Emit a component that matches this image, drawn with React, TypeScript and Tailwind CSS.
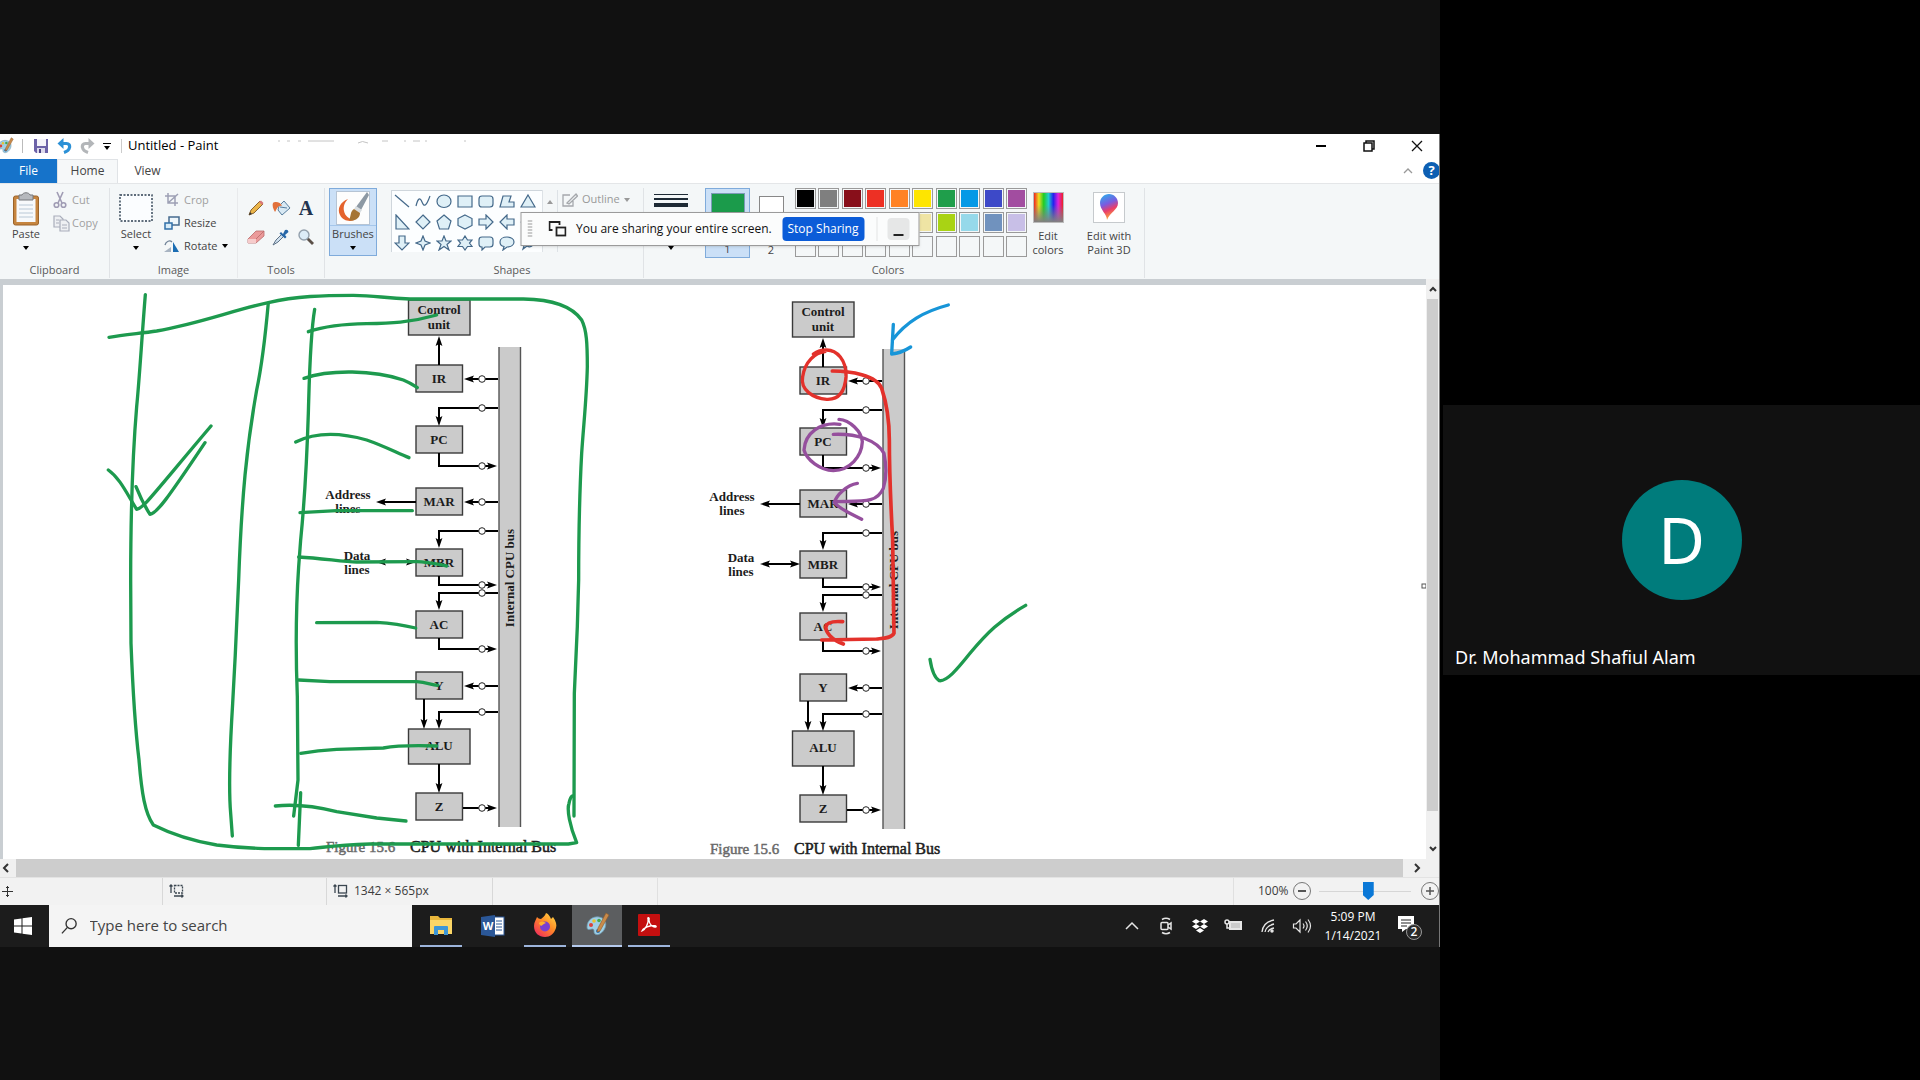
import React from "react";

const GREEN = "#1d9a4e";

/* ---------- canvas drawing: CPU diagram ---------- */

function Box({ x, y, w, h }: { x: number; y: number; w: number; h: number }) {
  return <rect x={x} y={y} width={w} height={h} fill="#cbcbcb" stroke="#3a3a3a" strokeWidth="1.4" />;
}

function Head({ x, y, dir }: { x: number; y: number; dir: "up" | "down" | "left" | "right" }) {
  const angle = { right: 0, down: 90, left: 180, up: 270 }[dir];
  return <path d="M0 0L-10 -3.4L-8 0L-10 3.4Z" fill="#000" transform={`translate(${x} ${y}) rotate(${angle})`} />;
}

function Diagram({ dx, dy }: { dx: number; dy: number }) {
  const registers: [string, number][] = [
    ["IR", 365],
    ["PC", 426],
    ["MAR", 488],
    ["MBR", 549],
    ["AC", 611],
    ["Y", 672],
    ["Z", 793],
  ];
  const circles = [379, 408, 466, 502, 531, 585, 593, 649, 686, 712, 808];
  return (
    <g transform={`translate(${dx} ${dy})`} fontFamily='"Liberation Serif", serif'>
      <rect x="499" y="347" width="21" height="480" fill="#cbcbcb" />
      <path d="M499 347V827M520.5 347V827" stroke="#555" strokeWidth="1.4" />
      <Box x={408.5} y={300} w={61.5} h={35} />
      {registers.map(([name, y]) => (
        <Box key={name} x={416} y={y} w={46.5} h={27} />
      ))}
      <Box x={408.5} y={729} w={61.5} h={35} />
      <g fill="none" stroke="#000" strokeWidth="2">
        <path d="M439 365V342" />
        <path d="M498 379H468" />
        <path d="M498 408H439V420" />
        <path d="M439 453V466H492" />
        <path d="M498 502H468" />
        <path d="M416 502H383" />
        <path d="M498 531H439V542" />
        <path d="M383 562H410" />
        <path d="M439 576V585H492" />
        <path d="M498 593H439V604" />
        <path d="M439 638V649H492" />
        <path d="M498 686H468" />
        <path d="M424 699V722" />
        <path d="M498 712H439V722" />
        <path d="M439 764V786" />
        <path d="M463 808H492" />
      </g>
      <Head x={439} y={336} dir="up" />
      <Head x={464} y={379} dir="left" />
      <Head x={439} y={426} dir="down" />
      <Head x={497} y={466} dir="right" />
      <Head x={464} y={502} dir="left" />
      <Head x={376} y={502} dir="left" />
      <Head x={439} y={548} dir="down" />
      <Head x={376} y={562} dir="left" />
      <Head x={416} y={562} dir="right" />
      <Head x={497} y={585} dir="right" />
      <Head x={439} y={610} dir="down" />
      <Head x={497} y={649} dir="right" />
      <Head x={464} y={686} dir="left" />
      <Head x={424} y={729} dir="down" />
      <Head x={439} y={729} dir="down" />
      <Head x={439} y={793} dir="down" />
      <Head x={497} y={808} dir="right" />
      {circles.map((y) => (
        <circle key={y} cx="482" cy={y} r="3.3" fill="#fff" stroke="#222" strokeWidth="1" />
      ))}
      <g fontWeight="bold" fontSize="13" textAnchor="middle" fill="#1c1c1c">
        <text x="439" y="314">Control</text>
        <text x="439" y="329">unit</text>
        {registers.map(([name, y]) => (
          <text key={name} x="439" y={y + 18}>{name}</text>
        ))}
        <text x="439" y="750">ALU</text>
        <text x="348" y="499">Address</text>
        <text x="348" y="513">lines</text>
        <text x="357" y="560">Data</text>
        <text x="357" y="574">lines</text>
        <text transform="translate(514 578) rotate(-90)">Internal CPU bus</text>
      </g>
      <text x="326" y="852" fontSize="15" fill="#6b6b6b" stroke="#6b6b6b" strokeWidth="0.5">Figure 15.6</text>
      <text x="410" y="852" fontSize="16" fill="#1c1c1c" stroke="#1c1c1c" strokeWidth="0.5">CPU with Internal Bus</text>
    </g>
  );
}

function Canvas() {
  return (
    <svg viewBox="3 285 1423 574" className="block h-[574px] w-[1423px] shrink-0" role="img" aria-label="CPU with internal bus diagram">
      <Diagram dx={0} dy={0} />
      <Diagram dx={384} dy={2} />
      <g transform="translate(90 280) scale(0.33333)" fill="none" stroke={GREEN} strokeWidth="10" strokeLinecap="round" strokeLinejoin="round">
        <path d="M57 172C100 165 150 160 200 153C330 130 430 90 535 68C620 48 700 46 790 46C860 46 880 55 960 57L1300 57C1370 58 1440 70 1475 120C1490 150 1492 190 1492 260C1490 350 1482 420 1475 520C1468 650 1466 750 1466 900L1462 1040L1453 1240L1452 1608" />
        <path d="M166 44C155 180 148 300 140 380C130 500 122 650 122 900L123 1090C128 1220 135 1340 147 1440C155 1540 165 1600 190 1635C250 1665 320 1685 380 1695C480 1708 560 1706 660 1706C720 1700 740 1695 840 1692L1435 1692L1460 1688C1440 1640 1430 1590 1437 1570C1440 1555 1443 1550 1447 1548" />
        <path d="M535 68C525 180 515 260 500 330C470 500 455 650 446 900C442 1000 435 1150 428 1270C420 1400 415 1520 422 1600L427 1668" />
        <path d="M674 88C660 170 658 300 655 400C650 560 640 700 632 780L626 860C618 980 616 1100 622 1250L624 1500L611 1608" />
        <path d="M632 1538L625 1696" />
        <path d="M655 155C700 140 760 132 830 131C900 130 960 128 1040 105" />
        <path d="M642 295C720 268 850 270 940 300C960 308 970 315 982 323" />
        <path d="M617 486C680 455 760 460 830 480C880 497 920 518 957 533" />
        <path d="M630 698L740 692L967 692" />
        <path d="M626 831C700 835 760 846 800 846L980 845C1010 845 1040 852 1070 858" />
        <path d="M680 1028L860 1027C910 1030 940 1035 977 1044" />
        <path d="M626 1200L720 1205L980 1205C1010 1207 1020 1213 1043 1216" />
        <path d="M632 1420C660 1415 700 1410 740 1408L880 1404C930 1395 980 1396 1040 1398" />
        <path d="M556 1578C610 1572 680 1580 740 1595L860 1614L948 1623" />
        <path d="M55 570C90 595 110 640 140 688C160 685 175 660 363 438" />
        <path d="M138 620C150 650 165 680 180 703C200 700 230 660 345 488" />
      </g>
      <g transform="translate(690 290) scale(0.33333)" fill="none" strokeWidth="10" strokeLinecap="round" strokeLinejoin="round">
        <path stroke="#1795d8" d="M775 45C700 65 650 95 607 150M610 103L605 192C630 190 645 182 662 171" />
        <path stroke="#e3312b" d="M405 185C375 188 345 215 338 260C330 300 370 325 410 328C450 330 465 300 468 260C470 210 440 180 410 180C395 180 380 185 370 192" />
        <path stroke="#e3312b" strokeWidth="11" d="M427 243C480 243 560 255 575 295C590 340 598 380 598 450C598 560 602 640 608 750L612 1030C605 1045 580 1045 560 1047L395 1050M458 995C430 993 410 997 408 1010C405 1025 425 1050 460 1062" />
        <path stroke="#954f9d" d="M450 403C390 395 345 430 342 480C350 510 390 540 430 542C480 540 515 500 517 455C515 425 480 390 447 388M430 433C500 430 560 450 582 490C590 530 588 570 580 595C560 640 520 633 435 635M502 580C470 585 440 615 433 637C445 655 480 670 515 688" />
        <path stroke={GREEN} d="M720 1108C725 1140 735 1165 748 1172C770 1175 800 1140 840 1090C890 1030 930 990 1007 946" />
      </g>
      <rect x="1422" y="584" width="4" height="4" fill="#fff" stroke="#555" strokeWidth="1" />
    </svg>
  );
}

/* ---------- icons ---------- */

function PaintLogo({ className }: { className: string }) {
  return (
    <svg viewBox="0 0 26 26" className={className} aria-hidden="true">
      <path d="M3 15C3 8 9 4 15 5C21 6 23 11 21 16C19 21 14 24 11 22C9 20 11 18 9 17C6 17 3 19 3 15Z" fill="#9fd0e6" stroke="#6f98ad" strokeWidth=".8" />
      <circle cx="7" cy="13" r="2" fill="#d8433b" />
      <circle cx="10" cy="9" r="1.8" fill="#e9c22f" />
      <circle cx="15" cy="8.5" r="1.8" fill="#47a650" />
      <circle cx="14" cy="19" r="2" fill="#2d6fb5" />
      <path d="M22 1L25 3L16 19L13 20L14 16Z" fill="#c98a4a" stroke="#8b5a2b" strokeWidth=".6" />
    </svg>
  );
}

function SaveIcon() {
  return (
    <svg viewBox="0 0 16 16" className="size-4" aria-hidden="true">
      <path d="M1 1H15V15H3L1 13Z" fill="#6c62a8" />
      <rect x="4" y="1" width="9" height="7" fill="#f4f3fa" />
      <rect x="4" y="10" width="8" height="5" fill="#dcd9ec" />
      <rect x="6" y="11" width="2" height="4" fill="#4b4286" />
    </svg>
  );
}

function UndoIcon({ color, flip }: { color: string; flip?: boolean }) {
  return (
    <svg viewBox="0 0 16 16" className={flip ? "size-4 -scale-x-100" : "size-4"} aria-hidden="true">
      <path d="M3.5 5.5H9.5C12 5.5 13 7.5 12.5 9.5C12 12 10 13.5 7 14.5" fill="none" stroke={color} strokeWidth="3.2" />
      <path d="M0.5 5.5L6.5 0V11Z" fill={color} />
    </svg>
  );
}

function Caret({ className }: { className: string }) {
  return (
    <svg viewBox="0 0 6 4" className={className} aria-hidden="true">
      <path d="M0 0H6L3 4Z" fill="currentColor" />
    </svg>
  );
}

function PasteIcon() {
  return (
    <svg viewBox="0 0 28 34" className="h-[34px] w-7" aria-hidden="true">
      <rect x="1.5" y="4" width="25" height="29" rx="2" fill="#c6853f" stroke="#9b632a" />
      <rect x="4.5" y="7" width="19" height="23" fill="#f7f9fb" />
      <path d="M7 13H21M7 17H21M7 21H21M7 25H21" stroke="#b9c8d6" />
      <path d="M7 3H10C11 0 17 0 18 3H21V8H7Z" fill="#b6b9bd" stroke="#77797c" />
    </svg>
  );
}

function CutIcon() {
  return (
    <svg viewBox="0 0 16 18" className="h-[18px] w-4" fill="none" stroke="#a09cb4" strokeWidth="1.6" aria-hidden="true">
      <path d="M5 1L10 12M11 1L6 12" />
      <circle cx="4.5" cy="14" r="2.3" />
      <circle cx="11.5" cy="14" r="2.3" />
    </svg>
  );
}

function CopyIcon() {
  return (
    <svg viewBox="0 0 18 18" className="size-[18px]" fill="#eef0f3" stroke="#a9aebb" strokeWidth="1.2" aria-hidden="true">
      <path d="M2 2H8L11 5V13H2Z" />
      <path d="M8 6H14L17 9V17H8Z" />
      <path d="M4 6H7M4 9H7M10 11H15M10 14H15" />
    </svg>
  );
}

function SelectIcon() {
  return (
    <svg viewBox="0 0 34 28" className="h-7 w-[34px]" aria-hidden="true">
      <rect x="1" y="1" width="32" height="26" fill="#fbfdff" stroke="#2c3e50" strokeWidth="1.4" strokeDasharray="2 1.5" />
    </svg>
  );
}

function CropIcon() {
  return (
    <svg viewBox="0 0 16 14" className="h-3.5 w-4" fill="none" stroke="#9da0b4" strokeWidth="1.5" aria-hidden="true">
      <path d="M4 0V10H14M1 3H11V13M4 10L14 1" />
    </svg>
  );
}

function ResizeIcon() {
  return (
    <svg viewBox="0 0 16 14" className="h-3.5 w-4" aria-hidden="true">
      <rect x="5" y="1" width="10" height="8" fill="#eef6fb" stroke="#466b8e" strokeWidth="1.5" />
      <rect x="1" y="7" width="7" height="6" fill="#d9ecf7" stroke="#2f6fa8" strokeWidth="1.5" />
    </svg>
  );
}

function RotateIcon() {
  return (
    <svg viewBox="0 0 16 14" className="h-3.5 w-4" aria-hidden="true">
      <path d="M9 3V13H15Z" fill="#1b6db3" />
      <path d="M0 13L7 8V13Z" fill="#a8b4c2" />
      <path d="M1 6C2 2 6 1 8 3" fill="none" stroke="#6f8297" strokeWidth="1.3" />
    </svg>
  );
}

const toolIcons: [string, React.ReactNode][] = [
  ["Pencil", <g key="p"><path d="M1 15L3 10L12 1L15 4L6 13Z" fill="#eab54a" stroke="#8a6430" /><path d="M11 2L14 5L15.5 3L13 .5Z" fill="#d87878" /><path d="M1 15L2 12L4 14Z" fill="#333" /></g>],
  ["Fill", <g key="f"><path d="M6 6L11 1L17 8L9 15L5 10Z" fill="#d8e9f4" stroke="#577d9d" /><path d="M7 7L14 8" stroke="#577d9d" /><path d="M0 3C2 1 8 2 9 6C5 5 4 9 2 12C0 9 -1 5 0 3Z" fill="#e2703a" /></g>],
  ["Text", <text key="t" x="8" y="15" textAnchor="middle" fontFamily='"Liberation Serif", serif' fontWeight="bold" fontSize="20" fill="#22344f">A</text>],
  ["Eraser", <g key="e"><path d="M0 10L8 2H16V7L8 14H0Z" fill="#eb9a9a" stroke="#b96a6a" strokeWidth=".8" /><path d="M0 10H8V14H0Z" fill="#f6cccc" /><path d="M8 10L16 2" stroke="#b96a6a" strokeWidth=".8" /></g>],
  ["Color picker", <g key="c"><path d="M0 16L3 11L9 5L11 7L5 13Z" fill="#cfe0ee" stroke="#5d7186" /><path d="M8 3L10 5L12 1Q15 0 15.5 3L12 6L13.5 8L12 9.5L6.5 4.5Z" fill="#2767a8" /></g>],
  ["Magnifier", <g key="m"><path d="M9 9L15 15" stroke="#5b5048" strokeWidth="2.8" /><circle cx="6" cy="6" r="5" fill="#dcecf8" stroke="#93a0ad" strokeWidth="1.4" /></g>],
];

function BrushIcon() {
  return (
    <svg viewBox="0 0 34 34" className="size-[34px]" aria-hidden="true">
      <rect x=".5" y=".5" width="33" height="33" fill="#fdfdfd" stroke="#b6c4d4" />
      <path d="M12 8C4 11 1 18 4 24C7 30 14 31 18 29C13 28 9 25 8 20C7 15 9 11 12 8Z" fill="#e4622c" />
      <path d="M31 1L33 4L25 19L20 16Z" fill="#8d99a4" />
      <path d="M20 15L26 19L24 22L18 18Z" fill="#d8dde0" />
      <path d="M18 18L24 22C24 28 17 31 13 29C15 26 14 20 18 18Z" fill="#a57535" />
    </svg>
  );
}

const shapePaths: string[] = [
  "M1 2L15 14",
  "M1 13C3 5 5 4 7 9C9 14 11 14 15 3",
  "M8 2C12 2 15 5 15 8.5C15 12 12 14.5 8 14.5C4 14.5 1 12 1 8.5C1 5 4 2 8 2Z",
  "M1 3H15V14H1Z",
  "M4 3H12Q15 3 15 6V11Q15 14 12 14H4Q1 14 1 11V6Q1 3 4 3Z",
  "M4 3H12L10 9H15V14H1Z",
  "M8 2L15 14H1Z",
  "M2 1L15 15H2Z",
  "M8 1L15 8L8 15L1 8Z",
  "M8 1L15 7L12.5 15H3.5L1 7Z",
  "M8 1L15 4.5V11.5L8 15L1 11.5V4.5Z",
  "M1 5H8V1L15 8L8 15V11H1Z",
  "M15 5H8V1L1 8L8 15V11H15Z",
  "M5 1H11V8H15L8 15L1 8H5Z",
  "M8 1L10 6L15 8L10 10L8 15L6 10L1 8L6 6Z",
  "M8 1L10 6H15L11 9.5L13 15L8 11.5L3 15L5 9.5L1 6H6Z",
  "M8 1L10.5 5H15L12.5 8L15 11.5H10.5L8 15L5.5 11.5H1L3.5 8L1 5H5.5Z",
  "M4 2H12Q15 2 15 5V9Q15 12 12 12H7L4 15V12Q1 12 1 9V5Q1 2 4 2Z",
  "M8 2C12 2 15 4 15 7C15 10 12 12 8 12L4 15L5 11.5C2 11 1 9 1 7C1 4 4 2 8 2Z",
  "M3 4Q5 1 8 3Q12 1 13 4Q16 7 13 10Q10 13 7 11L3 14L4 11Q0 8 3 4Z",
];

/* The up arrow sits at the end of the second row, ahead of the down arrow. */
const shapes: string[] = [...shapePaths.slice(0, 13), "M5 15V8H1L8 1L15 8H11V15Z", ...shapePaths.slice(13)];

function ShapeGrid() {
  return (
    <div className="grid h-[62px] w-[151px] grid-cols-[repeat(7,16px)] content-start gap-[5px] border-t border-l border-[#cfd6dc] bg-[#fcfeff] pt-0.5 pl-0.5">
      {shapes.map((d, i) => (
        <button key={i} aria-label={`Shape ${i + 1}`} className="size-4">
          <svg viewBox="0 0 16 16" className="size-4">
            <path d={d} fill={i < 2 ? "none" : "#dff0f7"} stroke="#44698a" strokeWidth="1.2" />
          </svg>
        </button>
      ))}
    </div>
  );
}

/* ---------- ribbon ---------- */

function Group({ label, className, children }: { label: string; className: string; children: React.ReactNode }) {
  return (
    <section aria-label={label} className={"flex h-[90px] shrink-0 flex-col justify-between " + className}>
      <div className="flex">{children}</div>
      <div className="text-center leading-4 text-[#5a5a5a]">{label}</div>
    </section>
  );
}

const palette: string[] = [
  "#000000", "#7f7f7f", "#880f1a", "#ed3024", "#ff8224", "#fee500", "#1f9e4b", "#0499e6", "#3d49c8", "#a24da0",
  "#ffffff", "#c3c3c3", "#b97a57", "#feaec9", "#ffc90e", "#efe4a4", "#a9d314", "#96d9ea", "#7092be", "#c8bfe7",
];

function Ribbon() {
  return (
    <div className="flex h-24 overflow-hidden border-t border-[#e4e6e8] bg-[#f4f7f8] pt-1 text-[11px] text-[#444]">
      <Group label="Clipboard" className="w-[110px] border-r border-[#e0e3e6]">
        <button className="ml-2 flex w-9 flex-col items-center pt-1 leading-4">
          <PasteIcon />
          <span>Paste</span>
          <Caret className="mt-1 h-1 w-1.5 text-black" />
        </button>
        <div className="ml-2 flex flex-col gap-[3px] pt-0.5 text-[#a0a0a0]">
          <button className="flex items-center gap-1 leading-5"><CutIcon />Cut</button>
          <button className="flex items-center gap-0.5 leading-5"><CopyIcon />Copy</button>
        </div>
      </Group>
      <Group label="Image" className="w-[128px] border-r border-[#e8eaec]">
        <button className="ml-2 flex w-9 flex-col items-center pt-1.5 leading-4">
          <SelectIcon />
          <span className="mt-1">Select</span>
          <Caret className="mt-1 h-1 w-1.5 text-black" />
        </button>
        <div className="ml-2.5 flex flex-col gap-[3px] pt-0.5">
          <button className="flex items-center gap-1 leading-5 text-[#a0a0a0]"><CropIcon />Crop</button>
          <button className="flex items-center gap-1 leading-5"><ResizeIcon />Resize</button>
          <button className="flex items-center gap-1 leading-5"><RotateIcon />Rotate<Caret className="h-1 w-1.5 text-black" /></button>
        </div>
      </Group>
      <Group label="Tools" className="w-[87px] border-r border-[#e0e3e6]">
        <div className="ml-2.5 grid grid-cols-3 gap-x-[9px] gap-y-[13px] pt-3">
          {toolIcons.map(([name, art]) => (
            <button key={name} aria-label={name} className="size-4">
              <svg viewBox="0 0 16 16" className="size-4 overflow-visible">{art}</svg>
            </button>
          ))}
        </div>
      </Group>
      <div className="w-[60px] shrink-0 pl-1">
        <button className="flex h-[68px] w-12 flex-col items-center border border-[#7fabdb] bg-[#cbe0f7] pt-0.5 leading-4">
          <BrushIcon />
          <span className="w-full border-t border-[#a5c6ea]">Brushes</span>
          <Caret className="mt-1 h-1 w-1.5 text-black" />
        </button>
      </div>
      <Group label="Shapes" className="w-[259px] border-r border-[#e0e3e6] pr-1">
        <div className="ml-1.5 flex pt-0.5">
          <ShapeGrid />
          <div className="flex w-4 flex-col items-center border-x border-[#dde2e6] pt-2.5 text-[#999]">
            <Caret className="h-1 w-1.5 rotate-180" />
          </div>
          <button className="ml-1 flex h-5 items-center gap-1 text-[#999]">
            <svg viewBox="0 0 16 14" className="h-3.5 w-4" fill="none" stroke="#a5a8ac" strokeWidth="1.3" aria-hidden="true">
              <path d="M8 2H1V13H11V8M5 10L14 1L15.5 3L7 11Z" />
            </svg>
            <span>Outline</span>
            <Caret className="h-1 w-1.5" />
          </button>
        </div>
      </Group>
      <button aria-label="Size" className="flex w-[61px] shrink-0 flex-col items-start gap-[3px] pt-1.5 pl-2.5">
        <span className="h-px w-[34px] bg-[#1e2a35]" />
        <span className="h-0.5 w-[34px] bg-[#1e2a35]" />
        <span className="h-1 w-[34px] bg-[#1e2a35]" />
        <Caret className="mt-9 ml-3.5 h-1 w-1.5 text-black" />
      </button>
      <Group label="Colors" className="w-[366px]">
        <button className="flex h-[70px] w-[45px] shrink-0 flex-col items-center justify-between border border-[#7fabdb] bg-[#cbe0f7] pt-1 leading-4">
          <span className="h-8 w-[34px] border border-[#7d9bb8] bg-[#1b9b4b]" />
          <span>1</span>
        </button>
        <button className="ml-1.5 flex h-[70px] w-[30px] shrink-0 flex-col items-center justify-between pt-2 leading-4">
          <span className="h-6 w-[25px] border border-[#888] bg-white" />
          <span>2</span>
        </button>
        <div className="ml-[9px] grid w-[232px] shrink-0 grid-cols-[repeat(10,21px)] justify-between gap-y-[3px]">
          {Array.from({ length: 30 }, (_, i) => (
            <button
              key={i}
              aria-label={`Color ${i + 1}`}
              className="h-[21px] border border-[#9a9a9a] bg-clip-content p-px"
              style={{ backgroundColor: palette[i] ?? "#f4f7f8" }}
            />
          ))}
        </div>
        <button className="ml-[3px] flex w-9 shrink-0 flex-col items-center pt-1 leading-3.5">
          <span className="h-[31px] w-[31px] border border-[#bbb] bg-[linear-gradient(to_bottom,transparent_40%,#808080),linear-gradient(to_right,#e22,#ed2,#2c2,#2cc,#22e,#d2d,#e22)]" />
          <span className="mt-1.5">Edit colors</span>
        </button>
      </Group>
      <div className="flex h-[90px] w-[74px] shrink-0 border-r border-[#e0e3e6] pl-2">
        <button className="flex w-[60px] flex-col items-center pt-1 leading-3.5">
          <span className="flex h-[31px] w-8 shrink-0 items-center justify-center border border-[#c6cacd] bg-white">
            <svg viewBox="0 0 20 26" className="h-[26px] w-5" aria-hidden="true">
              <defs>
                <linearGradient id="p3d" x1="0" y1="0" x2="0.3" y2="1">
                  <stop offset="0" stopColor="#22b8ee" />
                  <stop offset=".45" stopColor="#7a5be0" />
                  <stop offset=".7" stopColor="#ea3d6a" />
                  <stop offset="1" stopColor="#f9a63a" />
                </linearGradient>
              </defs>
              <path d="M10 0C15 0 19 4 19 9C19 16 11 18 8 26C8 20 1 16 1 9C1 4 5 0 10 0Z" fill="url(#p3d)" />
            </svg>
          </span>
          <span className="mt-1.5 w-[54px]">Edit with Paint 3D</span>
        </button>
      </div>
    </div>
  );
}

/* ---------- sharing toolbar ---------- */

function SharingBar() {
  return (
    <div className="absolute top-[78px] left-1/2 flex h-[34px] w-[399px] -translate-x-1/2 items-center border border-[#9b9b9b] bg-[#fbfcfc] pl-1.5 text-[12px] shadow-sm">
      <svg viewBox="0 0 5 18" className="h-[18px] w-[5px]" aria-hidden="true">
        <path d="M0 1H5M0 4H5M0 7H5M0 10H5M0 13H5M0 16H5" stroke="#999" />
      </svg>
      <svg viewBox="0 0 18 16" className="ml-4 h-4 w-[18px]" fill="none" stroke="#222" strokeWidth="1.8" aria-hidden="true">
        <path d="M4 9H1V1H11V4" />
        <rect x="8" y="6.5" width="9" height="8" />
      </svg>
      <span className="ml-2.5 w-[206px] whitespace-nowrap text-[#111]">You are sharing your entire screen.</span>
      <button className="h-6 w-[82px] shrink-0 rounded bg-[#0b5cd8] text-white">Stop Sharing</button>
      <span className="ml-3 h-6 w-px bg-[#e3e3e3]" />
      <button aria-label="Minimize" className="ml-2.5 flex size-[22px] items-end justify-center rounded bg-[#e6e7e7] pb-1">
        <span className="h-0.5 w-2.5 bg-[#222]" />
      </button>
    </div>
  );
}

/* ---------- status bar and taskbar ---------- */

function SizeIcon({ dashed }: { dashed?: boolean }) {
  return (
    <svg viewBox="0 0 15 14" className="h-3.5 w-[15px]" fill="none" stroke="#3b4650" strokeWidth="1.3" aria-hidden="true">
      <path d="M2 1V9M.5 2.5L2 1L3.5 2.5" />
      <rect x="5.5" y="1.5" width="8" height="7.5" strokeDasharray={dashed ? "2 1" : undefined} />
      <path d="M5 12H14M12.5 10.5L14 12L12.5 13.5" />
    </svg>
  );
}

function StatusBar() {
  return (
    <div className="flex h-7 items-center border-t border-[#e3e3e3] bg-[#f2f2f2] text-[12px] text-[#3c3c3c]">
      <div className="flex h-full w-[163px] items-center border-r border-[#d8d8d8] pl-0.5">
        <svg viewBox="0 0 11 11" className="size-[11px]" stroke="#333" fill="none" aria-hidden="true">
          <path d="M5.5 0V11M0 5.5H11M4 2L5.5 .5L7 2M4 9L5.5 10.5L7 9" />
        </svg>
      </div>
      <div className="flex h-full w-[164px] items-center border-r border-[#d8d8d8] pl-1.5"><SizeIcon dashed /></div>
      <div className="flex h-full w-[166px] items-center gap-1.5 border-r border-[#d8d8d8] pl-1.5"><SizeIcon /><span>1342 × 565px</span></div>
      <div className="h-full w-[165px] border-r border-[#e0e0e0]" />
      <div className="h-full flex-1 border-r border-[#e0e0e0]" />
      <div className="flex h-full w-[205px] shrink-0 items-center pl-6">
        <span className="w-9">100%</span>
        <button aria-label="Zoom out" className="flex size-[18px] shrink-0 items-center justify-center rounded-full border border-[#777]">
          <span className="h-0.5 w-2 bg-[#555]" />
        </button>
        <input
          type="range"
          aria-label="Zoom"
          defaultValue={54}
          className="mr-2.5 ml-2 h-5 w-[92px] shrink-0 appearance-none bg-[linear-gradient(#d6d6d6,#d6d6d6)] bg-[length:100%_1px] bg-center bg-no-repeat [&::-webkit-slider-thumb]:h-[18px] [&::-webkit-slider-thumb]:w-[11px] [&::-webkit-slider-thumb]:appearance-none [&::-webkit-slider-thumb]:bg-[#0a78d7] [&::-webkit-slider-thumb]:[clip-path:polygon(0_0,100%_0,100%_72%,50%_100%,0_72%)]"
        />
        <button aria-label="Zoom in" className="flex size-[18px] shrink-0 items-center justify-center rounded-full border border-[#777]">
          <svg viewBox="0 0 8 8" className="size-2" stroke="#555" strokeWidth="1.5" aria-hidden="true"><path d="M4 0V8M0 4H8" /></svg>
        </button>
      </div>
    </div>
  );
}

function TrayIcon({ label, children }: { label: string; children: React.ReactNode }) {
  return (
    <button aria-label={label} className="flex w-[34px] shrink-0 justify-center">
      <svg viewBox="0 0 20 20" className="size-5" fill="none" stroke="#e6e6e6" strokeWidth="1.5">{children}</svg>
    </button>
  );
}

function Taskbar() {
  return (
    <div className="flex h-[42px] bg-[#1c1c1c] text-white">
      <button aria-label="Start" className="flex w-[49px] shrink-0 items-center justify-center pr-1">
        <svg viewBox="0 0 18 18" className="size-[18px]" fill="#fff"><path d="M0 2.5L7.5 1.5V8.5H0ZM8.5 1.3L18 0V8.5H8.5ZM0 9.5H7.5V16.5L0 15.5ZM8.5 9.5H18V18L8.5 16.7Z" /></svg>
      </button>
      <label className="flex w-[363px] shrink-0 items-center bg-[#f4f4f4] pl-3">
        <svg viewBox="0 0 18 18" className="size-[18px]" fill="none" stroke="#333" strokeWidth="1.5" aria-hidden="true"><circle cx="11" cy="6.5" r="5.5" /><path d="M7 10.5L1 17" /></svg>
        <input aria-label="Search" placeholder="Type here to search" className="ml-3 w-full bg-transparent text-[15px] outline-none placeholder:text-[#444]" />
      </label>
      <button aria-label="File Explorer" className="ml-2 flex w-[42px] shrink-0 items-center justify-center border-b-2 border-[#9db5dc]">
        <svg viewBox="0 0 24 22" className="h-[22px] w-6"><path d="M1 2H9L11 4H23V20H1Z" fill="#e9b73c" /><path d="M1 6H23V20H1Z" fill="#fbd667" /><path d="M5 21V13Q5 12 6 12H18Q19 12 19 13V21H15V16H9V21Z" fill="#3d96d6" /></svg>
      </button>
      <button aria-label="Word" className="ml-2.5 flex w-[42px] shrink-0 items-center justify-center">
        <svg viewBox="0 0 24 22" className="h-[22px] w-6"><rect x="12" y="2" width="11" height="18" fill="#fff" stroke="#2b5797" /><path d="M15 6H21M15 9H21M15 12H21M15 15H21" stroke="#2b5797" /><path d="M0 2L14 0V22L0 20Z" fill="#2b5797" /><text x="7" y="15" textAnchor="middle" fontFamily='"Open Sans", sans-serif' fontSize="11" fontWeight="bold" fill="#fff">W</text></svg>
      </button>
      <button aria-label="Firefox" className="ml-2.5 flex w-[42px] shrink-0 items-center justify-center border-b-2 border-[#9db5dc]">
        <svg viewBox="0 0 24 24" className="size-6">
          <defs><linearGradient id="ff" x1="1" y1="0" x2="0.2" y2="1"><stop offset="0" stopColor="#ffe14a" /><stop offset=".5" stopColor="#ff8a26" /><stop offset="1" stopColor="#f02d5c" /></linearGradient></defs>
          <path d="M4 4C5 5 6 6 8 6C10 4 12 3 13 0C16 1 17 4 18 6L20 4C23 8 24 12 23 15C21 21 17 24 12 24C6 24 1 20 1 13C1 9 3 7 4 4Z" fill="url(#ff)" />
          <circle cx="12" cy="13.5" r="5" fill="#7a3fd0" />
          <path d="M6 10C9 8 11 9 13 10C10 11 10 12 8 13C7 12 6 11 6 10Z" fill="#ffb02e" />
        </svg>
      </button>
      <button aria-label="Paint" className="ml-1.5 flex w-[50px] shrink-0 items-center justify-center border-b-2 border-[#b6cbee] bg-[#5c5e60]">
        <PaintLogo className="size-[26px]" />
      </button>
      <button aria-label="Adobe Acrobat" className="ml-1.5 flex w-[42px] shrink-0 items-center justify-center border-b-2 border-[#9db5dc]">
        <svg viewBox="0 0 24 22" className="h-[22px] w-6"><rect x="1" width="22" height="22" rx="1" fill="#c40f0f" /><path d="M5 17C8 16 12 9 11 5C10 3 13 3 12 6C12 10 16 14 19 13C20 12 17 11 13 12C9 13 6 15 5 17Z" fill="none" stroke="#fff" strokeWidth="1.3" /></svg>
      </button>
      <div className="flex flex-1 items-center justify-end">
        <TrayIcon label="Show hidden icons"><path d="M4 13L10 7L16 13" /></TrayIcon>
        <TrayIcon label="Meet now"><rect x="5" y="6.5" width="7" height="7" rx="1" /><path d="M12 9L15 7V13L12 11M6 3.5Q10 1 14 3.5M6 16.5Q10 19 14 16.5" /></TrayIcon>
        <TrayIcon label="Dropbox"><path d="M6 3L10 5.5L6 8L2 5.5ZM14 3L18 5.5L14 8L10 5.5ZM6 8L10 10.5L6 13L2 10.5ZM14 8L18 10.5L14 13L10 10.5ZM10 12L14 14.5L10 17L6 14.5Z" fill="#fff" stroke="none" /></TrayIcon>
        <TrayIcon label="Battery"><rect x="6" y="6" width="11" height="7" fill="#ccc" strokeWidth="2" /><circle cx="3" cy="6" r="2" /><path d="M3 8V12H6" /></TrayIcon>
        <TrayIcon label="Wi-Fi"><path d="M4 16Q5 6 16 4M7 16Q8 10 16 8M10 16Q11 13 16 12" strokeWidth="1.3" /><circle cx="14" cy="15" r="1" fill="#fff" /></TrayIcon>
        <TrayIcon label="Volume"><path d="M1.5 8V12H4L8 16V4L4 8ZM11 7.5Q13 10 11 12.5M13.5 5.5Q17 10 13.5 14.5M16 3.5Q21 10 16 16.5" strokeWidth="1.2" /></TrayIcon>
        <div className="w-[68px] shrink-0 text-center text-[12px] leading-[19px]">
          <div>5:09 PM</div>
          <div>1/14/2021</div>
        </div>
        <button aria-label="2 notifications" className="ml-2 flex w-11 shrink-0">
          <svg viewBox="0 0 28 28" className="size-7">
            <path d="M3 4H19V17H11L7 20V17H3Z" fill="#fff" />
            <path d="M6 8H16M6 11H16M6 14H12" stroke="#222" strokeWidth="1.2" />
            <circle cx="19" cy="20" r="7.5" fill="#2a2a2a" stroke="#999" />
            <text x="19" y="24" textAnchor="middle" fontFamily='"Open Sans", sans-serif' fontSize="12" fontWeight="600" fill="#fff">2</text>
          </svg>
        </button>
      </div>
    </div>
  );
}

/* ---------- window ---------- */

function Arrow({ d }: { d: string }) {
  return (
    <svg viewBox="0 0 10 10" className="size-2.5" fill="none" stroke="#333" strokeWidth="2" aria-hidden="true"><path d={d} /></svg>
  );
}

function PaintWindow() {
  return (
    <div className="relative w-full overflow-hidden border-r border-[#777] bg-white">
      <header className="flex h-[25px] items-center">
        <div className="-ml-1 flex items-center"><PaintLogo className="size-[18px]" /></div>
        <span className="ml-2 h-3.5 w-px bg-[#bbb]" />
        <button aria-label="Save" className="ml-2.5"><SaveIcon /></button>
        <button aria-label="Undo" className="ml-2"><UndoIcon color="#2b90d6" /></button>
        <button aria-label="Redo" className="ml-1.5"><UndoIcon color="#b3b6b9" flip /></button>
        <button aria-label="Customize" className="ml-2 flex flex-col items-center gap-0.5">
          <span className="h-px w-2 bg-black" />
          <Caret className="h-1 w-2 text-black" />
        </button>
        <span className="ml-2.5 h-3.5 w-px bg-[#ccc]" />
        <h1 className="ml-1.5 text-[13px]">Untitled - Paint</h1>
        <svg viewBox="0 0 190 4" className="mb-2 ml-[60px] h-1 w-[190px]" aria-hidden="true">
          <path d="M0 1H2M9 1H12M20 1H23M30 1H56M80 3Q84 0 90 3M104 1H110M126 1H128M135 1H142M147 1H149M186 1H188" stroke="#c4c4c4" fill="none" />
        </svg>
        <div className="ml-auto flex items-center">
          <button aria-label="Minimize" className="flex w-12 justify-center pr-1"><span className="h-0.5 w-2.5 bg-black" /></button>
          <button aria-label="Restore" className="flex w-12 justify-center pr-1">
            <svg viewBox="0 0 12 12" className="size-3" fill="none" stroke="#111" strokeWidth="1.5"><rect x="1" y="3" width="8" height="8" /><path d="M3 3V1H11V9H9" /></svg>
          </button>
          <button aria-label="Close" className="flex w-11 justify-center">
            <svg viewBox="0 0 12 12" className="size-3" stroke="#111" strokeWidth="1.3"><path d="M1 1L11 11M11 1L1 11" /></svg>
          </button>
        </div>
      </header>
      <nav className="flex h-6 items-stretch text-[12px] text-[#444]">
        <button className="w-[57px] bg-[#1673ca] text-white">File</button>
        <button className="w-[61px] border-x border-t border-[#e0e3e6] bg-[#f6f8f9]">Home</button>
        <button className="w-[59px]">View</button>
        <div className="ml-auto flex items-center">
          <svg viewBox="0 0 10 6" className="mr-2.5 h-1.5 w-2.5" fill="none" stroke="#999" strokeWidth="1.3" aria-hidden="true"><path d="M1 5L5 1L9 5" /></svg>
          <button aria-label="Help" className="-mr-px flex size-[17px] items-center justify-center rounded-full bg-[#0c5fb3] text-[13px] font-bold text-white">?</button>
        </div>
      </nav>
      <Ribbon />
      <div className="flex h-[580px]">
        <div className="flex min-w-0 flex-1 flex-col bg-[#c9ced2] pl-[3px]">
          <div className="h-1.5 shrink-0" />
          <div className="flex flex-1 overflow-hidden bg-white"><Canvas /></div>
        </div>
        <div className="flex w-[13px] shrink-0 flex-col items-center bg-[#f0f0f0]">
          <div className="flex h-5 items-center"><Arrow d="M2 7L5 4L8 7" /></div>
          <div className="h-[512px] w-[11px] bg-[#cdcdcd]" />
          <div className="mt-auto flex h-5 items-center"><Arrow d="M2 3L5 6L8 3" /></div>
        </div>
      </div>
      <div className="flex h-[18px] items-center bg-[#f0f0f0]">
        <div className="flex w-4 justify-center pr-1"><Arrow d="M7 1L3 5L7 9" /></div>
        <div className="h-full flex-1 bg-[#cdcdcd]" />
        <div className="flex w-9 justify-center pr-2"><Arrow d="M3 1L7 5L3 9" /></div>
      </div>
      <StatusBar />
      <Taskbar />
      <SharingBar />
    </div>
  );
}

export default function App() {
  return (
    <main className="flex min-h-screen bg-black font-['Open_Sans',sans-serif]">
      <section aria-label="Shared screen" className="flex w-3/4 items-center bg-[#111111]">
        <PaintWindow />
      </section>
      <aside className="flex w-1/4 items-center pl-[3px]">
        <div className="relative flex h-[270px] w-full items-center justify-center bg-[#111111] font-['Noto_Sans',sans-serif] text-white">
          <div className="flex size-[120px] items-center justify-center rounded-full bg-[#007c7c] text-[64px] leading-none">D</div>
          <div className="absolute bottom-1.5 left-3 text-[18px] leading-6">Dr. Mohammad Shafiul Alam</div>
        </div>
      </aside>
    </main>
  );
}
